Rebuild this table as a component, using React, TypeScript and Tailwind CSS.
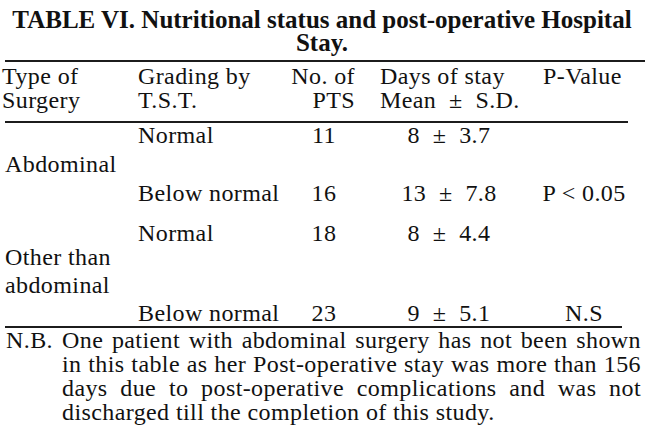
const cols = "grid grid-cols-[138px_152px_68px_182px_88px]";

type DataRow = { grade: string; pts: string; days: string; p: string };

const groups: { label: string[]; rows: DataRow[] }[] = [
  {
    label: ["Abdominal"],
    rows: [
      { grade: "Normal", pts: "11", days: "8 ± 3.7", p: "" },
      { grade: "Below normal", pts: "16", days: "13 ± 7.8", p: "P < 0.05" },
    ],
  },
  {
    label: ["Other than", "abdominal"],
    rows: [
      { grade: "Normal", pts: "18", days: "8 ± 4.4", p: "" },
      { grade: "Below normal", pts: "23", days: "9 ± 5.1", p: "N.S" },
    ],
  },
];

function Cells({ row }: { row: DataRow }) {
  return (
    <>
      <div className="whitespace-nowrap">{row.grade}</div>
      <div className="text-center">{row.pts}</div>
      <div className="text-center whitespace-pre">{row.days.replace(" ± ", "  ±  ")}</div>
      <div className="text-center whitespace-nowrap">{row.p}</div>
    </>
  );
}

export default function App() {
  return (
    <div className="w-[650px] h-[447px] overflow-hidden bg-white text-[#111] font-['Liberation_Serif','Times_New_Roman',serif]">
      {/* caption */}
      <h1 className="pt-[8px] pr-[6px] text-center text-[25px] leading-[23px] font-bold">
        TABLE VI. Nutritional status and post-operative Hospital Stay.
      </h1>
      <div className="mt-[6px] ml-[5px] w-[640px] border-t-2 border-[#1c1c1c]" />

      <div className="text-[24px] tracking-[0.4px]">
        {/* column heads */}
        <div className={`${cols} pt-[2px] pb-[9px] leading-[24px]`}>
          <div className="pl-[2px]">
            Type of
            <br />
            Surgery
          </div>
          <div>
            Grading by
            <br />
            T.S.T.
          </div>
          <div className="text-right pr-[3px]">
            No. of
            <br />
            PTS
          </div>
          <div className="pl-[22px] whitespace-pre">
            {"Days of stay\nMean  ±  S.D."}
          </div>
          <div className="pl-[3px]">P-Value</div>
        </div>
        <div className="ml-[5px] w-[623px] border-t-2 border-[#1c1c1c]" />

        {/* body */}
        <div className="leading-[25px]">
          {groups.map((g, i) => (
            <div
              key={i}
              className={`${cols} grid-rows-[25px_1fr_25px] ${i === 0 ? "h-[83px]" : "h-[105px] mt-[15px]"}`}
            >
              <div
                className={`col-start-1 row-start-1 row-span-3 self-center pl-[5px] ${i === 1 ? "leading-[28px] pb-[6px]" : ""}`}
              >
                {g.label.map((l) => (
                  <div key={l}>{l}</div>
                ))}
              </div>
              <div className="col-start-2 col-span-4 row-start-1 grid grid-cols-subgrid">
                <Cells row={g.rows[0]} />
              </div>
              <div className="col-start-2 col-span-4 row-start-3 grid grid-cols-subgrid">
                <Cells row={g.rows[1]} />
              </div>
            </div>
          ))}
        </div>
        <div className="ml-[5px] w-[617px] border-t-2 border-[#1c1c1c]" />

        {/* footnote */}
        <div className="flex leading-[24px]">
          <div className="w-[62px] shrink-0 pl-[6px]">N.B.</div>
          <p className="w-[579px] text-justify">
            One patient with abdominal surgery has not been shown in this table as her Post-operative stay
            was more than 156 days due to post-operative complications and was not discharged till the
            completion of this study.
          </p>
        </div>
      </div>
    </div>
  );
}
